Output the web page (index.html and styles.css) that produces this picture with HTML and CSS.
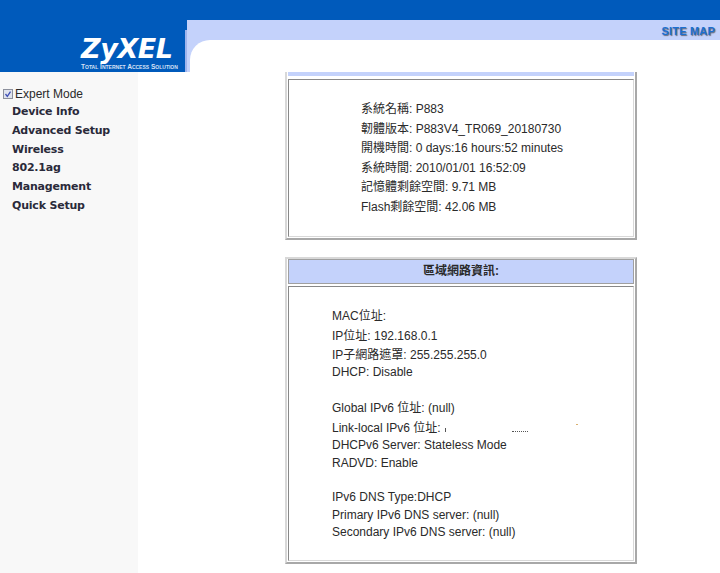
FILE: index.html

```html
<!DOCTYPE html>
<html lang="zh-Hant">
<head>
    <meta charset="UTF-8">
    <meta name="viewport" content="width=device-width, initial-scale=1.0">
    <title>ZyXEL P883</title>
    <link rel="stylesheet" href="styles.css">
</head>
<body>
    <div class="header">
        <div class="logo-block">
            <div class="logo-name">ZyXEL</div>
            <div class="logo-tag">Total Internet Access Solution</div>
        </div>
        <div class="header-right">
            <div class="header-blue"></div>
            <div class="header-band"><span class="site-map">SITE MAP</span></div>
            <div class="header-white"></div>
        </div>
    </div>

    <div class="page">
        <!-- Left menu -->
        <div class="sidebar">
            <div class="expert">
                <svg class="expert-box" width="10" height="10" viewBox="0 0 10 10"><rect x="0.5" y="0.5" width="9" height="9" fill="#dfe3ee" stroke="#8c909c"/><path d="M2.5 5 L4.3 7.3 L7.5 2.6" fill="none" stroke="#3f4fb5" stroke-width="1.3"/></svg>
                Expert Mode
            </div>
            <a class="menu-item">Device Info</a>
            <a class="menu-item">Advanced Setup</a>
            <a class="menu-item">Wireless</a>
            <a class="menu-item">802.1ag</a>
            <a class="menu-item">Management</a>
            <a class="menu-item">Quick Setup</a>
        </div>

        <div class="main">
            <!-- System info, scrolled under the header -->
            <div class="panel panel-system">
                <div class="panel-title panel-title-cut"></div>
                <div class="panel-body system-body">
                    <div class="row-wide">系統名稱: P883</div>
                    <div class="row-wide">韌體版本: P883V4_TR069_20180730</div>
                    <div class="row-wide">開機時間: 0 days:16 hours:52 minutes</div>
                    <div class="row-wide">系統時間: 2010/01/01 16:52:09</div>
                    <div class="row-wide">記憶體剩餘空間: 9.71 MB</div>
                    <div class="row-wide">Flash剩餘空間: 42.06 MB</div>
                </div>
            </div>

            <!-- LAN info -->
            <div class="panel panel-lan">
                <div class="panel-title">區域網路資訊:</div>
                <div class="panel-body lan-body">
                    <div class="row-wide">MAC位址:</div>
                    <div class="row-wide">IP位址: 192.168.0.1</div>
                    <div class="row-wide">IP子網路遮罩: 255.255.255.0</div>
                    <div class="row row-up">DHCP: Disable</div>
                    <div class="group group-first">
                        <div class="row-wide">Global IPv6 位址: (null)</div>
                        <div class="row-wide">Link-local IPv6 位址:<span class="mark-tick"></span><span class="mark-dots"></span><span class="mark-dot"></span></div>
                        <div class="row row-up">DHCPv6 Server: Stateless Mode</div>
                        <div class="row">RADVD: Enable</div>
                    </div>
                    <div class="group">
                        <div class="row">IPv6 DNS Type:DHCP</div>
                        <div class="row">Primary IPv6 DNS server: (null)</div>
                        <div class="row">Secondary IPv6 DNS server: (null)</div>
                    </div>
                </div>
            </div>
        </div>
    </div>
</body>
</html>
```

FILE: styles.css

```css
html, body { margin: 0; padding: 0; height: 100%; overflow: hidden; }
body { font-family: "Liberation Sans", Arial, "Noto Sans CJK TC", sans-serif; font-size: 12px; color: #2a2a2a; background-color: #fff; display: flex; flex-direction: column; }

.header { display: flex; height: 72px; flex: none; }
.logo-block { width: 187px; flex: none; background: linear-gradient(#9fb4ec, #9fb4ec) right 30px / 2px 42px no-repeat, #005abb; color: #fff; box-sizing: border-box; padding: 35px 0 0 81px; }
.logo-name { font-family: "DejaVu Sans", sans-serif; font-size: 27px; line-height: 27px; font-weight: bold; font-style: italic; letter-spacing: -0.4px; }
.logo-tag { font-size: 6.6px; line-height: 8px; margin-top: 1px; font-weight: bold; font-variant: small-caps; white-space: nowrap; color: #d5e0f5; }
.header-right { flex: 1; display: flex; flex-direction: column; background-color: #c4d2fb; }
.header-blue { height: 20px; background-color: #005abb; }
.header-band { height: 20px; text-align: right; padding-right: 5px; }
.site-map { font-size: 11px; line-height: 22px; font-weight: bold; color: #1c6fd0; text-shadow: 1px 1px 1px #667; letter-spacing: 0.2px; }
.header-white { flex: 1; margin-left: 3px; background-color: #fff; border-top-left-radius: 20px; }

.page { display: flex; flex: 1; min-height: 0; }
.sidebar { width: 138px; flex: none; background-color: #f8f8f8; padding-top: 15px; box-sizing: border-box; }
.expert { display: flex; align-items: center; height: 14px; margin-bottom: 2px; padding-left: 3px; }
.expert-box { margin-right: 2px; flex: none; }
.menu-item { display: block; padding-left: 12px; font-family: "DejaVu Sans", Verdana, sans-serif; font-size: 11px; line-height: 18.8px; font-weight: bold; color: #2a2a3a; letter-spacing: -0.2px; }

.main { flex: 1; padding-left: 147px; }
.panel { width: 352px; box-sizing: border-box; border: 2px solid; border-color: #d8d8d8 #a8a8a8 #a8a8a8 #d8d8d8; padding: 1px; }
.panel-system { border-top: 0; padding-top: 0; }
.panel-lan { margin-top: 17px; padding-top: 0; }
.panel-title { background-color: #c4d2fb; border: 1px solid #a0a0a0; height: 23px; line-height: 23px; text-align: center; font-weight: bold; margin-bottom: 2px; }
.panel-title-cut { height: 4px; border: 0; margin-bottom: 3px; }
.panel-body { border: 1px solid #888; border-right-color: #d8d8d8; border-bottom-color: #d8d8d8; box-sizing: border-box; }
.system-body { height: 158px; padding: 20px 0 0 72px; }
.lan-body { height: 275px; padding: 20px 0 0 43px; }

.row-wide { line-height: 19.5px; }
.row { line-height: 17.5px; }
.row-up { margin-top: -1px; }
.lan-body > .row-up { margin-top: -2px; }
.group { margin-top: 17px; }
.group-first { margin-top: 18px; }

/* leftovers of the blanked-out address */
.mark-tick { display: inline-block; width: 1px; height: 4px; margin-left: 4px; background-color: #555; }
.mark-dots { display: inline-block; width: 16px; height: 1px; margin-left: 66px; border-bottom: 1px dotted #555; }
.mark-dot { display: inline-block; width: 2px; height: 1px; margin: 0 0 7px 48px; background-color: #d9b070; }
```
